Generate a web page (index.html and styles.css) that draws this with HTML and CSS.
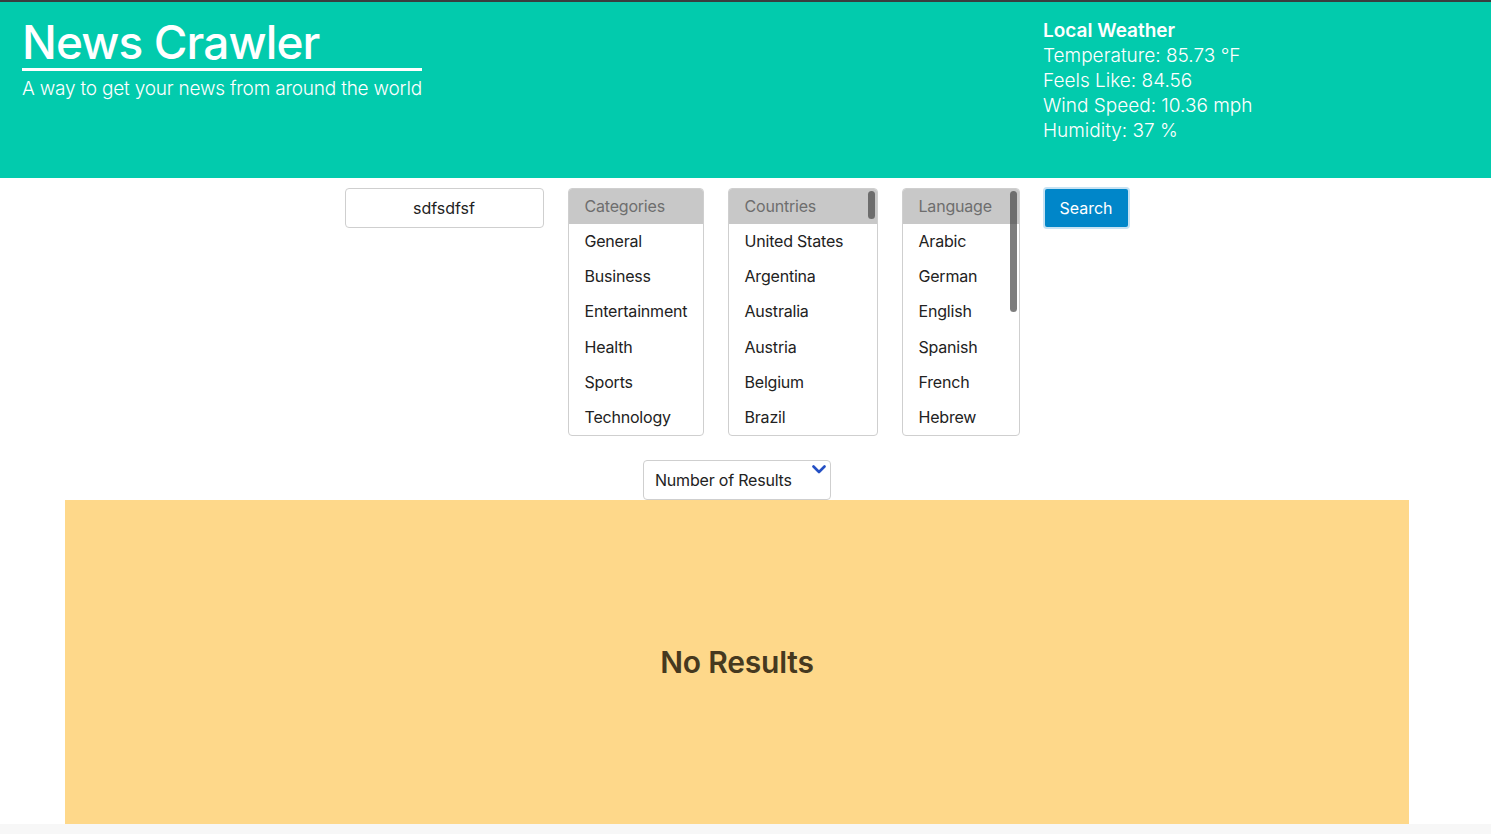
FILE: index.html
```html
<!DOCTYPE html>
<html lang="en">
<head>
<meta charset="utf-8">
<title>News Crawler</title>
<link rel="stylesheet" href="styles.css">
</head>
<body>
<header class="hero">
  <div class="brand">
    <h1 class="brand-title">News Crawler</h1>
    <p class="brand-sub">A way to get your news from around the world</p>
  </div>
  <div class="weather">
    <div class="weather-title">Local Weather</div>
    <div class="weather-line">Temperature: 85.73 °F</div>
    <div class="weather-line">Feels Like: 84.56</div>
    <div class="weather-line">Wind Speed: 10.36 mph</div>
    <div class="weather-line">Humidity: 37 %</div>
  </div>
</header>
<main class="main">
  <div class="controls">
    <div class="query">sdfsdfsf</div>
    <div class="list list-cat">
      <div class="list-head">Categories</div>
      <div class="opt">General</div>
      <div class="opt">Business</div>
      <div class="opt">Entertainment</div>
      <div class="opt">Health</div>
      <div class="opt">Sports</div>
      <div class="opt">Technology</div>
    </div>
    <div class="list list-country">
      <div class="list-head">Countries</div>
      <div class="opt">United States</div>
      <div class="opt">Argentina</div>
      <div class="opt">Australia</div>
      <div class="opt">Austria</div>
      <div class="opt">Belgium</div>
      <div class="opt">Brazil</div>
      <span class="thumb thumb-country"></span>
    </div>
    <div class="list list-lang">
      <div class="list-head">Language</div>
      <div class="opt">Arabic</div>
      <div class="opt">German</div>
      <div class="opt">English</div>
      <div class="opt">Spanish</div>
      <div class="opt">French</div>
      <div class="opt">Hebrew</div>
      <span class="thumb thumb-lang"></span>
    </div>
    <button class="search">Search</button>
  </div>
  <div class="count-row">
    <div class="count-select">
      <span>Number of Results</span>
      <svg class="chev" width="14" height="9" viewBox="0 0 14 9"><path d="M1.5 1.5 L7 7 L12.5 1.5" fill="none" stroke="#2450c4" stroke-width="2.6" stroke-linecap="round" stroke-linejoin="round"/></svg>
    </div>
  </div>
  <section class="results">
    <h2 class="no-results">No Results</h2>
  </section>
</main>
<footer class="foot"></footer>
</body>
</html>
```

FILE: styles.css
```css
* { box-sizing: border-box; }
html, body { margin: 0; padding: 0; }
body {
  font-family: Inter, "Noto Sans", "Liberation Sans", sans-serif;
  background: #ffffff;
  color: #222;
}
.hero {
  background: #02cbad;
  border-top: 2px solid #3a3d3f;
  height: 178px;
  display: flex;
  justify-content: space-between;
  padding: 0 0 0 22px;
  color: #fff;
}
.brand { width: 400px; }
.brand-title {
  margin: 14px 0 0;
  font-size: 46px;
  font-weight: 500;
  line-height: 52px;
  letter-spacing: -0.9px;
  border-bottom: 3px solid #fff;
  padding-bottom: 0;
  height: 55px;
}
.brand-sub {
  margin: 6px 0 0;
  font-size: 19px;
  font-weight: 300;
  line-height: 24px;
  white-space: nowrap;
  letter-spacing: -0.2px;
}
.weather {
  width: 448px;
  padding-top: 16px;
  font-size: 19px;
  line-height: 25px;
  font-weight: 300;
}
.weather-title { font-weight: 600; }
.main {
  padding-right: 17px;
}
.controls {
  display: flex;
  justify-content: center;
  align-items: flex-start;
  gap: 24px;
  padding-top: 10px;
}
.query {
  width: 199px;
  height: 40px;
  border: 1px solid #cfcfcf;
  border-radius: 4px;
  display: flex;
  align-items: center;
  justify-content: center;
  font-size: 16px;
  color: #222;
}
.list {
  position: relative;
  border: 1px solid #cfcfcf;
  border-radius: 4px;
  overflow: hidden;
  height: 248px;
  font-size: 16px;
  letter-spacing: -0.2px;
}
.list-cat { width: 136px; }
.list-country { width: 150px; }
.list-lang { width: 118px; }
.list-head {
  background: #c8c8c8;
  color: #6e6e6e;
  height: 35px;
  line-height: 35px;
  padding-left: 16px;
}
.opt {
  height: 35.2px;
  line-height: 35.2px;
  padding-left: 16px;
  color: #222;
  white-space: nowrap;
}
.thumb {
  position: absolute;
  right: 2px;
  top: 2px;
  width: 7px;
  border-radius: 4px;
  background: rgba(70, 70, 70, 0.7);
}
.thumb-country { height: 28px; }
.thumb-lang { height: 121px; }
.search {
  margin-top: -1px;
  margin-left: -1px;
  width: 87px;
  height: 42px;
  background: #0086c9;
  color: #fff;
  font-family: inherit;
  font-size: 16px;
  border: 2px solid #c6e2f3;
  border-radius: 4px;
  padding: 0;
}
.count-row {
  display: flex;
  justify-content: center;
  padding-top: 24px;
}
.count-select {
  position: relative;
  width: 188px;
  height: 40px;
  border: 1px solid #cfcfcf;
  border-radius: 4px;
  font-size: 16px;
  letter-spacing: -0.2px;
  color: #222;
  padding-left: 11px;
  display: flex;
  align-items: center;
  padding-top: 0;
}
.chev {
  position: absolute;
  right: 4px;
  top: 4px;
}
.results {
  margin: 0 65px;
  height: 324px;
  background: #fed88a;
  display: flex;
  align-items: center;
  justify-content: center;
}
.no-results {
  margin: 0;
  font-size: 30px;
  font-weight: 600;
  color: #46391f;
  letter-spacing: -0.2px;
}
.foot {
  height: 10px;
  background: #f7f7f7;
}
```
